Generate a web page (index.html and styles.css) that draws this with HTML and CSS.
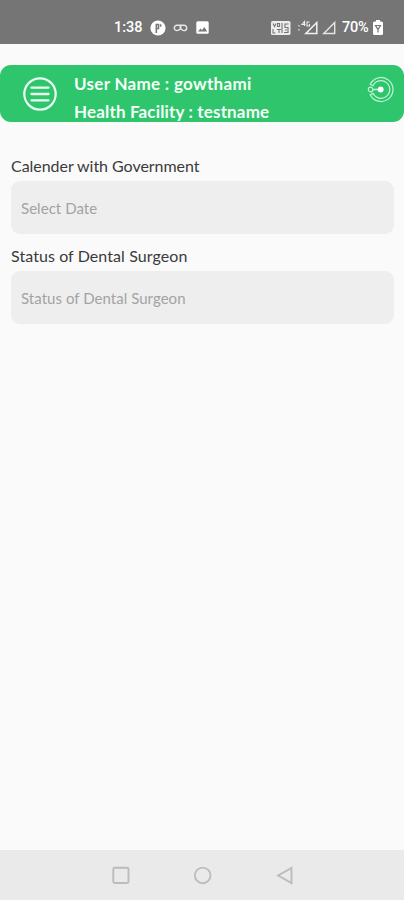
FILE: index.html
```html
<!DOCTYPE html>
<html lang="en">
<head>
<meta charset="utf-8">
<meta name="viewport" content="width=device-width, initial-scale=1">
<title>Health Facility</title>
<link rel="stylesheet" href="styles.css">
</head>
<body>
<div class="statusbar">
  <span class="time">1:38</span>
  <svg class="ic-app" width="16" height="16" viewBox="0 0 16 16"><circle cx="8" cy="8" r="7.6" fill="#fff"/><path d="M6.300 13V4.500h2.200v4H6.300M10.600 4.300v2.500" fill="none" stroke="#757575" stroke-width="1.500"/></svg>
  <svg class="ic-mask" width="15" height="8" viewBox="0 0 15 8"><path d="M4 1.200h7a2.700 2.700 0 0 1 0 5.400c-1.700 0-2.300-1.500-3.500-1.500S5.700 6.600 4 6.600a2.700 2.700 0 0 1 0-5.400z" fill="none" stroke="#e8e8e8" stroke-width="1.400"/><path d="M6.500 3.400h2" stroke="#e8e8e8" stroke-width="3"/></svg>
  <svg class="ic-photo" width="13" height="13" viewBox="0 0 13 13"><rect x=".3" y=".3" width="12.400" height="12.400" rx="1.500" fill="#fff"/><path d="M2 10.500l2.500-3 1.500 1.700 2.200-3.200 3 4.500z" fill="#757575"/></svg>
  <span class="spacer"></span>
  <svg class="ic-volte" width="20" height="14" viewBox="0 0 20 14"><rect width="19.500" height="14" rx="1.500" fill="#ededed"/><path d="M2 2.500l1.500 3L5 2.500M6.500 2.500h2v3h-2zM2 8v4h2.500M6 8.500h4M8 8.500V12M11 2v10M17.500 3H14v3.500h3v5h-4M14 9h2" fill="none" stroke="#757575" stroke-width="1.100"/></svg>
  <svg class="ic-sig1" width="20" height="15" viewBox="0 0 20 15"><path d="M18.800 2.500v11H7.800z" fill="none" stroke="#f2f2f2" stroke-width="1.500"/><path d="M1 5v1.500M1 9v1.500M6.500 6V1.500L4 4.500h3.500M11.500 2H9v4h2.500V4" fill="none" stroke="#eee" stroke-width="1.100"/></svg>
  <svg class="ic-sig2" width="14" height="15" viewBox="0 0 14 15"><path d="M12.700 2.500v11H1.700z" fill="none" stroke="#e5e5e5" stroke-width="1.400"/></svg>
  <span class="percent">70%</span>
  <svg class="ic-batt" width="10" height="15" viewBox="0 0 10 15"><path d="M3 0h4v1.500h1.500q1.500 0 1.500 1.500v10.500q0 1.500-1.500 1.500h-7Q0 15 0 13.500V3q0-1.500 1.500-1.500H3z" fill="#fff"/><path d="M2.500 5.500h5L5 9.500zM5 9v3.500" fill="none" stroke="#757575" stroke-width="1.200"/></svg>
</div>
<header class="header">
  <svg class="menu" width="34" height="34" viewBox="0 0 34 34" fill="none" stroke="#e9fff2" stroke-linecap="round"><circle cx="17" cy="17" r="15.700" stroke-width="2.200"/><path d="M8.500 10.700h17M8.500 17h17M8.500 23.300h17" stroke-width="2.300"/></svg>
  <div class="who">
    <div class="line user">User Name : gowthami</div>
    <div class="line facility">Health Facility : testname</div>
  </div>
  <svg class="logout" width="27" height="27" viewBox="0 0 27 27" fill="none" stroke="#c3f3d5" stroke-width="1.200"><path d="M3.200 8.300A12 12 0 1 1 3.200 18.700L6 17.300A8.800 8.800 0 1 0 6 9.700z"/><path d="M5.500 13.500H14" stroke-width="1.500"/><circle cx="13.700" cy="13.500" r="2.300" fill="#fff" stroke="#fff"/><circle cx="3.600" cy="13.500" r="2.300"/></svg>
</header>
<main class="form">
  <div class="label l1">Calender with Government</div>
  <div class="field"><span class="p1">Select Date</span></div>
  <div class="label l2">Status of Dental Surgeon</div>
  <div class="field"><span class="p2">Status of Dental Surgeon</span></div>
</main>
<nav class="navbar">
  <svg width="20" height="20" viewBox="0 0 20 20"><rect x="2.300" y="2.800" width="15.200" height="15.200" rx="1.500"/></svg>
  <svg width="20" height="20" viewBox="0 0 20 20"><circle cx="9.700" cy="10.400" r="7.800"/></svg>
  <svg width="20" height="20" viewBox="0 0 20 20"><path d="M16.500 3v15L3.200 10.500z"/></svg>
</nav>
</body>
</html>
```
FILE: styles.css
```css
* { box-sizing: border-box; }
body {
  margin: 0;
  height: 900px;
  display: flex;
  flex-direction: column;
  background: #fafafa;
  font-family: Lato, sans-serif;
  overflow: hidden;
}
svg { display: block; flex: none; }
.statusbar {
  height: 44px;
  padding: 11px 21px 0 114px;
  display: flex;
  align-items: center;
  background: #757575;
  color: #fff;
  font: 500 14.5px/20px Roboto, sans-serif;
}
.time { width: 28px; white-space: nowrap; }
.ic-app { margin-left: 8px; }
.ic-mask { margin-left: 7px; }
.ic-photo { margin-left: 8px; }
.spacer { flex: 1; }
.ic-sig1 { margin-left: 7px; }
.ic-sig2 { margin-left: 4px; }
.percent { margin-left: 6px; width: 28px; }
.percent { letter-spacing: -.2px; }
.ic-batt { margin-left: 3px; }
.header {
  margin-top: 21px;
  height: 57px;
  padding: 0 10px 0 23px;
  display: flex;
  background: #2fc56d;
  border-radius: 11px;
  color: #f4fff8;
}
.menu { margin-top: 12px; }
.who { flex: 1; margin-left: 17px; padding-top: 5px; }
.line { height: 28px; font-size: 17px; font-weight: 700; line-height: 28px; white-space: nowrap; }
.user { letter-spacing: .3px; }
.facility { letter-spacing: .16px; }
.logout { margin-top: 11px; }
.form { flex: 1; padding: 32px 10px 0 11px; }
.label { height: 27px; padding-top: 2px; font-size: 16px; line-height: 20px; color: #3a3a3a; white-space: nowrap; }
.l1 { letter-spacing: -.04px; }
.field {
  height: 53px;
  padding-left: 10px;
  display: flex;
  align-items: center;
  background: #eee;
  border-radius: 9px;
  font-size: 15px;
  letter-spacing: .04px;
  color: #a3a3a3;
  white-space: nowrap;
}
.l2 { margin-top: 10px; letter-spacing: .08px; }
.navbar {
  height: 50px;
  padding-left: 111px;
  display: flex;
  align-items: center;
  gap: 62px;
  background: #eaeaea;
  fill: none;
  stroke: #bcbcbc;
  stroke-width: 1.900;
}
```
